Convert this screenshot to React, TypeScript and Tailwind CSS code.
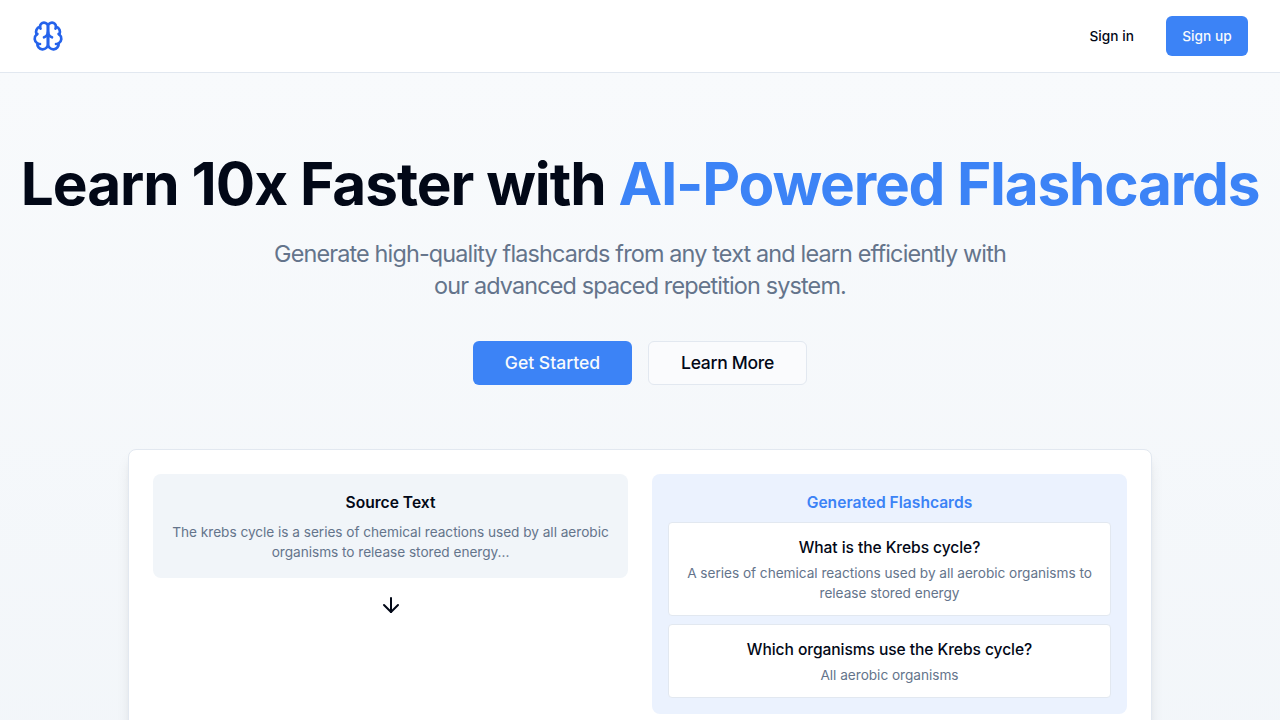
import { ArrowDown } from "lucide-react";

const cards = [
  { q: "What is the Krebs cycle?", a: "A series of chemical reactions used by all aerobic organisms to release stored energy" },
  { q: "Which organisms use the Krebs cycle?", a: "All aerobic organisms" },
];

function BrainLogo() {
  return (
    <svg
      viewBox="0 0 24 24"
      className="h-8 w-8 text-[#2563eb]"
      fill="none"
      stroke="currentColor"
      strokeWidth="2"
      strokeLinecap="round"
      strokeLinejoin="round"
    >
      <path d="M12 5a3 3 0 1 0-5.997.125 4 4 0 0 0-2.526 5.77 4 4 0 0 0 .556 6.588A4 4 0 1 0 12 18Z" />
      <path d="M12 5a3 3 0 1 1 5.997.125 4 4 0 0 1 2.526 5.77 4 4 0 0 1-.556 6.588A4 4 0 1 1 12 18Z" />
      <path d="M15 13a4.5 4.5 0 0 1-3-4 4.5 4.5 0 0 1-3 4" />
      <path d="M17.599 6.5a3 3 0 0 0 .399-1.375" />
      <path d="M6.003 5.125A3 3 0 0 0 6.401 6.5" />
      <path d="M3.477 10.896a4 4 0 0 1 .585-.396" />
      <path d="M19.938 10.5a4 4 0 0 1 .585.396" />
      <path d="M6 18a4 4 0 0 1-1.967-.516" />
      <path d="M19.967 17.484A4 4 0 0 1 18 18" />
    </svg>
  );
}

export default function App() {
  return (
    <div className="h-screen overflow-hidden bg-white font-['Inter',sans-serif] text-[#020817] antialiased">
      <header className="flex h-[73px] items-center justify-between border-b border-[#e2e8f0] px-8">
        <BrainLogo />
        <nav className="flex items-center gap-4 text-[13.65px] leading-5 font-medium tracking-[0.06px]">
          <a className="px-4 py-2">Sign in</a>
          <a className="flex h-10 w-[82px] items-center justify-center rounded-md bg-[#3c83f6] text-[#f8fafc]">Sign up</a>
        </nav>
      </header>
      <main className="flex h-[860px] flex-col items-center bg-gradient-to-b from-[#f8fafc] to-[#f1f5f9] pt-20 text-center">
        <h1 className="text-[58.5px] leading-[62px] font-bold tracking-[-1.03px] whitespace-nowrap">
          Learn 10x Faster with <span className="tracking-[-1.2px] text-[#3c83f6]">AI-Powered Flashcards</span>
        </h1>
        <p className="mt-[23px] w-[768px] text-[23.4px] leading-8 tracking-[-0.84px] text-[#64748b]">
          Generate high-quality flashcards from any text and learn efficiently with our advanced spaced repetition system.
        </p>
        <div className="mt-[39px] flex gap-4 text-[17.55px] font-medium">
          <button className="h-11 w-[159px] rounded-md bg-[#3c83f6] text-[#f8fafc]">Get Started</button>
          <button className="h-11 w-[159px] rounded-md border border-[#e2e8f0] bg-[#fafbfd] tracking-[-0.3px]">Learn More</button>
        </div>
        <section className="mt-16 grid h-[400px] w-[1024px] grid-cols-2 items-start gap-6 rounded-lg border border-[#e2e8f0] bg-white p-6 shadow-lg">
          <div className="flex flex-col items-center gap-[15px]">
            <div className="w-full rounded-lg bg-[#f1f5f9] p-4">
              <h3 className="mb-1.5 text-[15.6px] leading-[26px] font-semibold">Source Text</h3>
              <p className="text-[13.65px] leading-5 tracking-[-0.03px] text-[#64748b]">
                The krebs cycle is a series of chemical reactions used by all aerobic organisms to release stored energy...
              </p>
            </div>
            <ArrowDown className="h-6 w-6" />
          </div>
          <div className="rounded-lg bg-[#ebf2fe] p-4">
            <h3 className="mb-1.5 text-[15.6px] leading-[26px] font-semibold text-[#3c83f6]">Generated Flashcards</h3>
            <div className="flex flex-col gap-2">
              {cards.map((c) => (
                <div key={c.q} className="rounded border border-[#e2e8f0] bg-white p-3">
                  <h4 className="text-[15.6px] leading-[26px] font-medium tracking-[-0.07px]">{c.q}</h4>
                  <p className="mt-0.5 text-[13.65px] leading-5 tracking-[-0.03px] text-[#64748b]">{c.a}</p>
                </div>
              ))}
            </div>
          </div>
        </section>
      </main>
    </div>
  );
}
